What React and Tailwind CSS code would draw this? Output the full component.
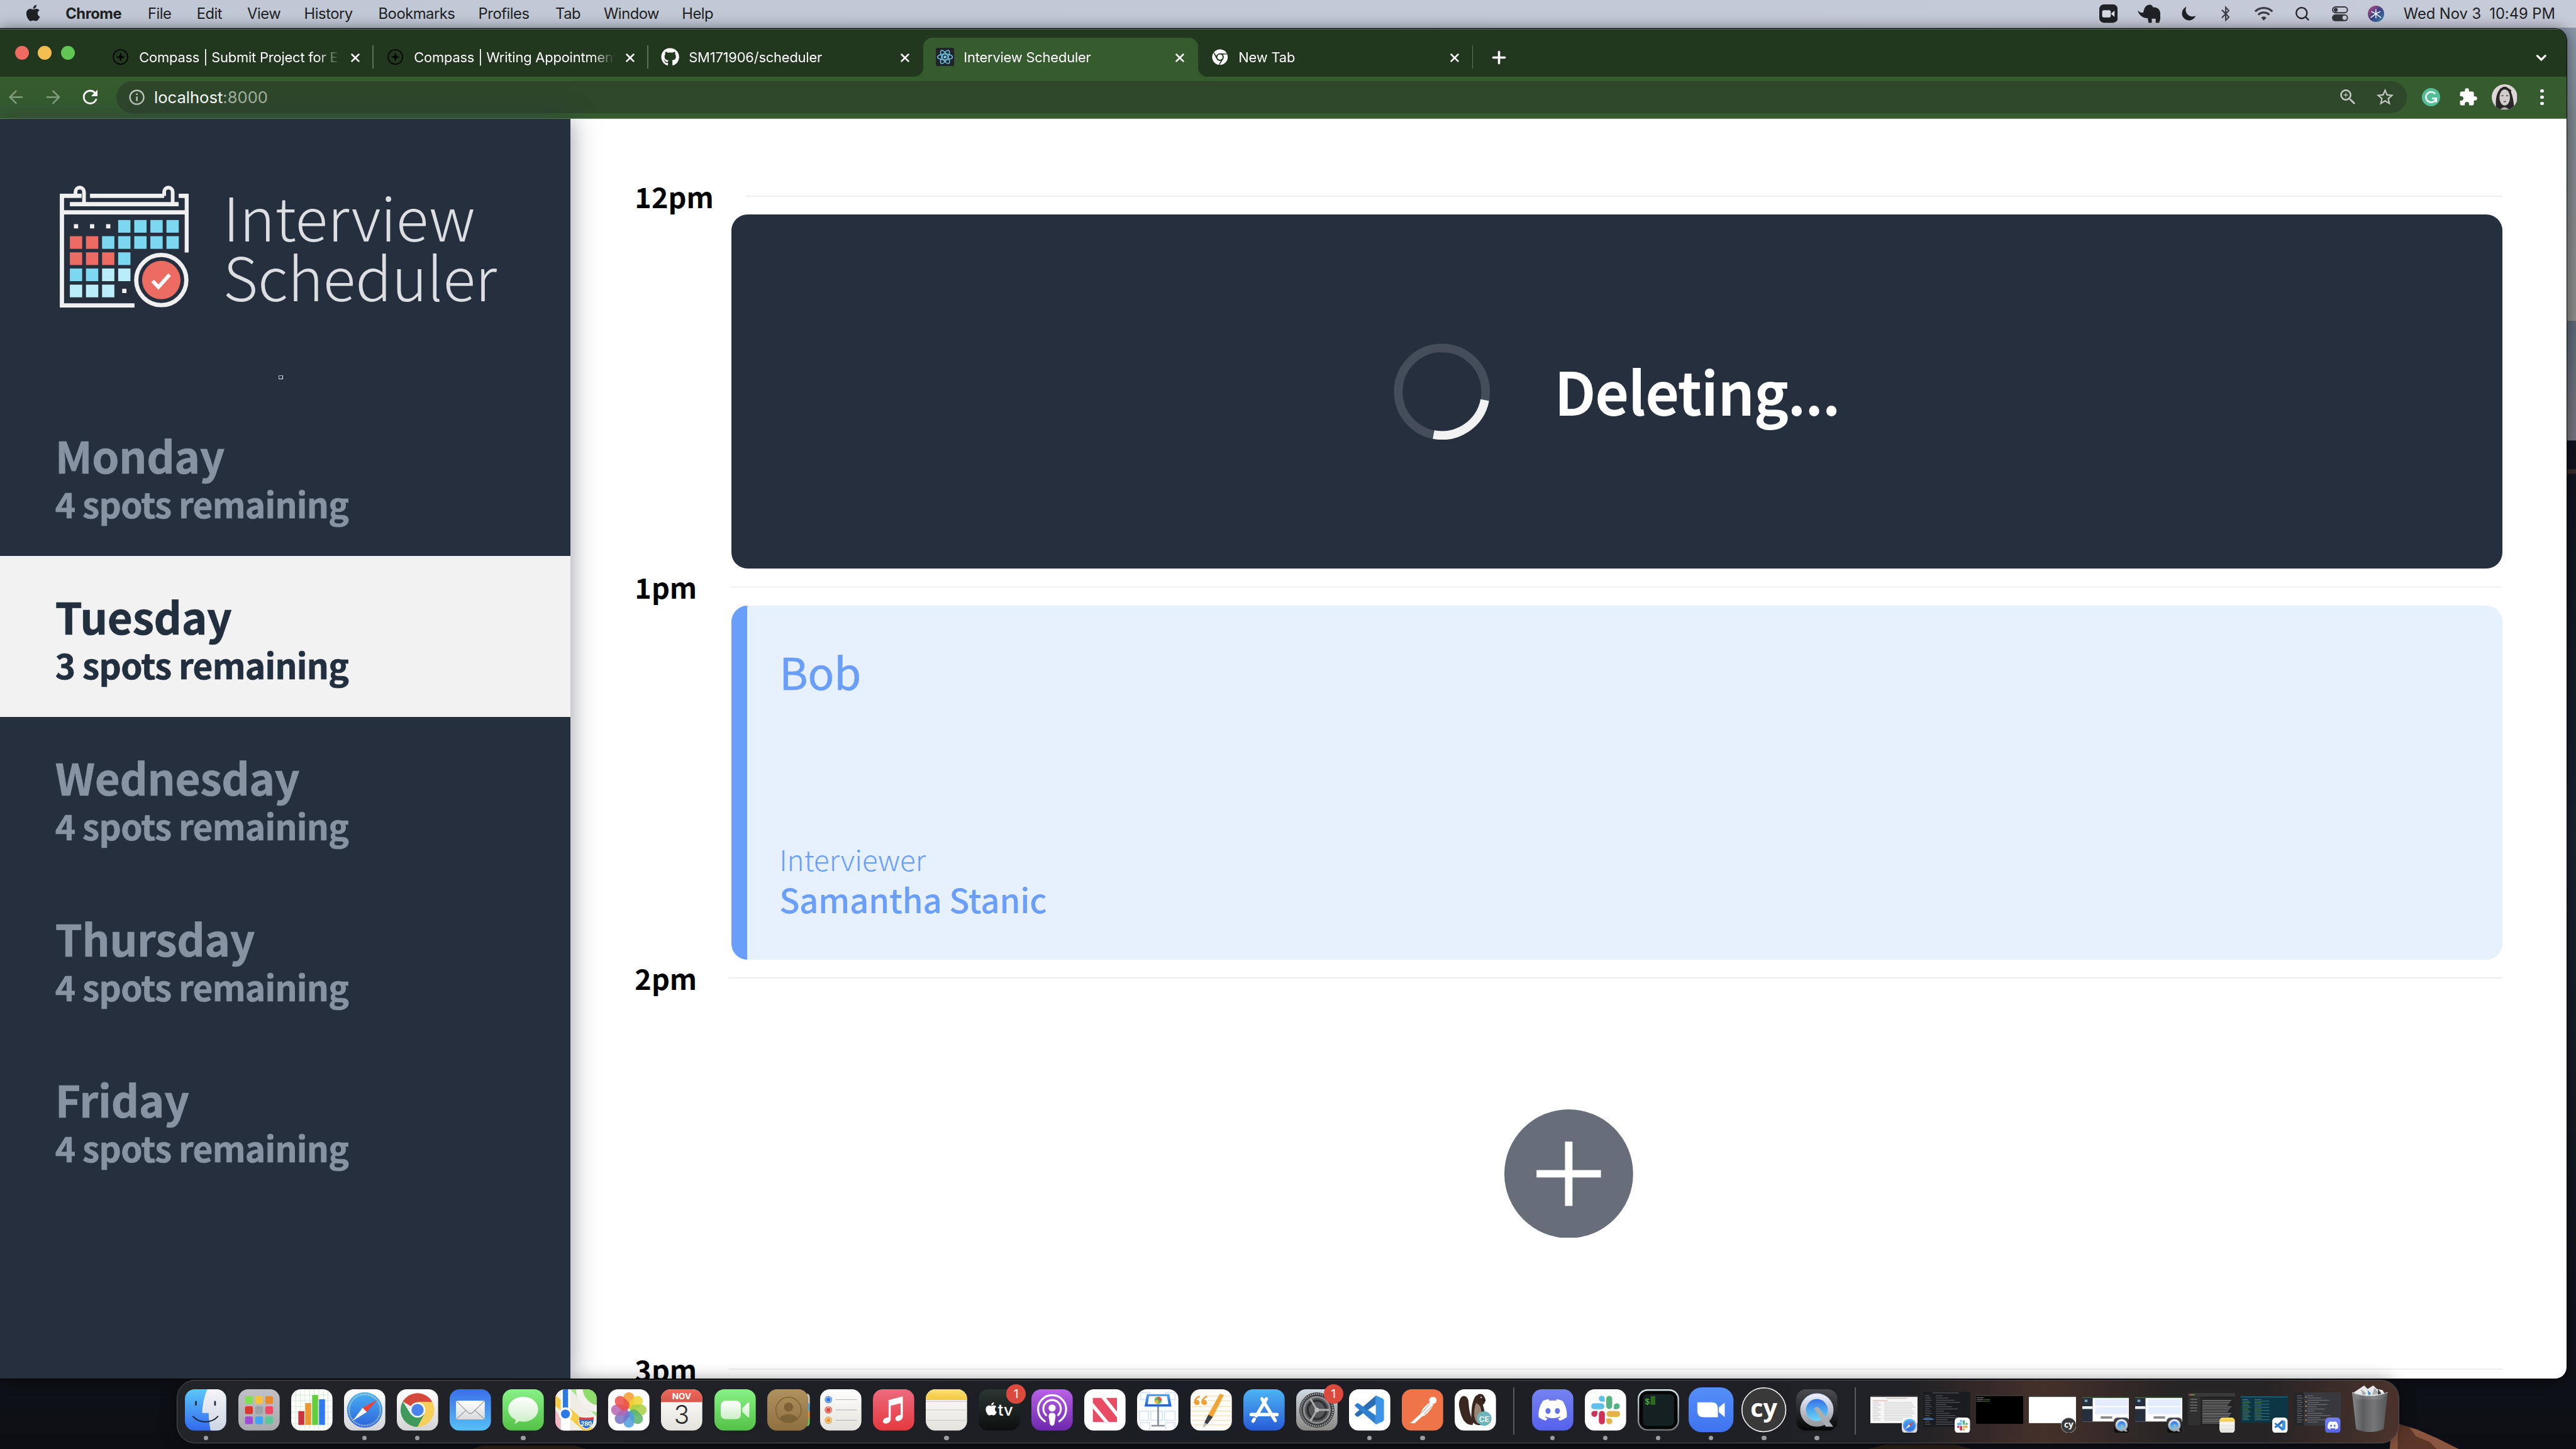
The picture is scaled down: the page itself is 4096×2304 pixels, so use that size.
import React from "react";
import { FaApple, FaBluetoothB, FaGithub, FaDiscord, FaChrome } from "react-icons/fa";
import { MdZoomIn, MdStarBorder, MdExtension, MdInfoOutline, MdRefresh } from "react-icons/md";
import { Search, X, Plus, ChevronDown, ArrowLeft, ArrowRight } from "lucide-react";

/* ---------- shared gradients ---------- */
const gradients = [
  ["gFinder", "#5ac8fa", "#3468ee"],
  ["gFinderR", "#f3f4f7", "#cfd6e2"],
  ["gWhite", "#ffffff", "#d4d4d6"],
  ["gPaper", "#ffffff", "#e4e2dc"],
  ["gSafari", "#48b0f2", "#2c63dc"],
  ["gMail", "#3a6fe8", "#57c0f6"],
  ["gEnvelope", "#ffffff", "#d9dadd"],
  ["gGreen", "#86f285", "#54c147"],
  ["gBubble", "#ffffff", "#cdeec8"],
  ["gGray", "#bfc1c4", "#a9aaad"],
  ["gRedTop", "#ef6a5d", "#d8564b"],
  ["gContacts", "#b0905c", "#8f7040"],
  ["gMusic", "#ec6a7c", "#e5383f"],
  ["gNotes", "#fbe07a", "#f5c73c"],
  ["gTv", "#2b3532", "#0c100f"],
  ["gPod", "#b861e6", "#6d28ad"],
  ["gStore", "#4db4f3", "#285bd8"],
  ["gGear", "#cfdbe2", "#8a8783"],
  ["gDiscord", "#7583f0", "#5661ec"],
  ["gZoom", "#548ff8", "#3f73f0"],
  ["gTermRim", "#d8eaf2", "#77777a"],
  ["gQt", "#4a4c50", "#050505"],
  ["gQtRing", "#e6ebfb", "#9a9ba0"],
  ["gQtIn", "#2d66e2", "#6fe6fb"],
  ["gKeynote", "#52a6f7", "#1e5fd6"],
];

function Defs() {
  return (
    <svg className="absolute h-0 w-0" aria-hidden="true">
      <defs>
        {gradients.map(([id, a, b]) => (
          <linearGradient key={id} id={id} x1="0" y1="0" x2="0" y2="1">
            <stop offset="0" stopColor={a} />
            <stop offset="1" stopColor={b} />
          </linearGradient>
        ))}
        <linearGradient id="gTrashH" x1="0" y1="0" x2="1" y2="0">
          <stop offset="0" stopColor="#8d9092" />
          <stop offset="0.3" stopColor="#5f6163" />
          <stop offset="0.6" stopColor="#7b7d7f" />
          <stop offset="1" stopColor="#55585a" />
        </linearGradient>
        <clipPath id="tileClip">
          <rect width="36" height="36" rx="8.5" />
        </clipPath>
      </defs>
    </svg>
  );
}

/* ---------- dock icons, 36 x 36 ---------- */
const Tile = ({ fill, children }) => (
  <g clipPath="url(#tileClip)">
    <rect width="36" height="36" fill={fill} />
    {children}
  </g>
);

const Finder = () => (
  <Tile fill="url(#gFinder)">
    <path d="M19.5 0C17 6 15.3 13 15 20.7h5.7c0 5.6.6 10.5 1.7 15.300H36V0z" fill="url(#gFinderR)" />
    <path d="M9.6 10.8v2.800M26.2 10.8v2.800" stroke="#1d2b45" strokeWidth="1.5" strokeLinecap="round" />
    <path d="M7 23.6c5.5 6.3 16.2 6.3 21.700 0" stroke="#17202f" strokeWidth="1" fill="none" strokeLinecap="round" />
  </Tile>
);

const padColors = ["#7ee04e", "#f4c23b", "#e98a2c", "#d9372c", "#9aa0a6", "#ee4a62", "#a24bd8", "#3fa4f5", "#5ac996"];
const Launchpad = () => (
  <Tile fill="url(#gGray)">
    {padColors.map((c, i) => (
      <rect key={c} x={5.8 + (i % 3) * 8.8} y={6 + Math.floor(i / 3) * 8.8} width="6.8" height="6.8" rx="1.6" fill={c} />
    ))}
  </Tile>
);

const Numbers = () => (
  <Tile fill="#fff">
    <path d="M4 0v36M8 0v36M12 0v36M16 0v36M20 0v36M24 0v36M28 0v36M32 0v36M0 5h36M0 10h36M0 15h36M0 20h36M0 25h36M0 30h36" stroke="#c9efc4" strokeWidth=".5" />
    <rect x="6.2" y="19" width="5.2" height="12" fill="#c9343f" />
    <rect x="12.2" y="12" width="5.2" height="19" fill="#ee962f" />
    <rect x="18.2" y="5" width="5.2" height="26" fill="#63cf3c" />
    <rect x="24.2" y="8.7" width="5.2" height="22.3" fill="#2f7bee" />
  </Tile>
);

const Safari = () => (
  <Tile fill="url(#gWhite)">
    <circle cx="18" cy="18" r="15.4" fill="url(#gSafari)" />
    <circle cx="18" cy="18" r="13.6" fill="none" stroke="#e6f2fd" strokeWidth="1.5" strokeDasharray=".5 .92" />
    <path d="M29 9 16.2 16.2l3.6 3.600z" fill="#ee4237" />
    <path d="M7.5 27.5l8.7-11.3 3.6 3.600z" fill="#f5f7fa" />
  </Tile>
);

const Chrome = () => (
  <Tile fill="url(#gWhite)">
    <path d="M18 18 5.2 10.7A14.7 14.7 0 0 1 30.8 11z" fill="#d3493a" />
    <path d="M18 11H30.8A14.7 14.7 0 0 1 18 32.7L24 21.5z" fill="#f6cf5a" />
    <path d="M5.2 10.7A14.7 14.7 0 0 0 18 32.7L24 21.6 12 21.6z" fill="#3f9a5c" />
    <circle cx="18" cy="18" r="6.7" fill="#fff" />
    <circle cx="18" cy="18" r="5.3" fill="#4a83ee" />
  </Tile>
);

const Mail = () => (
  <Tile fill="url(#gMail)">
    <rect x="5.5" y="10" width="25" height="16.3" rx="1" fill="url(#gEnvelope)" />
    <path d="M5.8 26 14.5 18M30.2 26 21.5 18M6 10.5l9.7 9.5q2.3 2.2 4.6 0l9.7-9.5" fill="none" stroke="#8f9297" strokeWidth=".6" />
  </Tile>
);

const Messages = () => (
  <Tile fill="url(#gGreen)">
    <path d="M18 6.5c7.4 0 13 4.8 13 10.8s-5.6 10.9-13 10.9c-1.3 0-2.5-.1-3.6-.4-1.2 1-2.600 1.9-4.2 2.2.9-1 1.3-2.3 1.2-3.600C7.3 24.5 5 21.2 5 17.3c0-6 5.6-10.8 13-10.8z" fill="url(#gBubble)" />
  </Tile>
);

const Maps = () => (
  <Tile fill="#f0ede6">
    <path d="M14 0h22v20z" fill="#8fdc6c" />
    <path d="M13 0h7l16 18v6z" fill="#a5e58a" />
    <path d="M21-3a18 18 0 0 0 19 20" fill="none" stroke="#f3f2ee" strokeWidth="6" />
    <path d="M-2 8 32 38" stroke="#f7cc49" strokeWidth="7" />
    <path d="M0 18v18h5V24z" fill="#f1b9c4" />
    <path d="M8.8 0v36" stroke="#fff" strokeWidth="8" />
    <path d="M8.8 0v18" stroke="#2b79e8" strokeWidth="4.6" />
    <circle cx="8.8" cy="21.5" r="5.8" fill="#fff" />
    <circle cx="8.8" cy="21.5" r="3.9" fill="#2b79e8" />
    <path d="M21 24q6 1.5 12 0c1.5 5 0 8-6 10.5C21 32 19.5 29 21 24z" fill="#2d6fd6" stroke="#fff" strokeWidth=".7" />
    <path d="M20.8 24q6 1.5 12.4 0l.3 2.600H20.5z" fill="#d8433a" />
    <text x="27" y="31.5" textAnchor="middle" fontSize="5" fontWeight="700" fill="#fff" fontFamily="Inter, sans-serif">280</text>
  </Tile>
);

const petals = ["#f29a2e", "#ecd531", "#a6cf43", "#58b36a", "#4d9de0", "#7a71c4", "#b565b0", "#ea4f45"];
const Photos = () => (
  <Tile fill="#fdfdfd">
    {petals.map((c, i) => (
      <rect key={c} x="13.3" y="2.6" width="9.4" height="14.4" rx="4.7" fill={c} fillOpacity=".85" transform={`rotate(${i * 45} 18 18)`} />
    ))}
  </Tile>
);

const Calendar = () => (
  <Tile fill="url(#gPaper)">
    <rect width="36" height="11.2" fill="url(#gRedTop)" />
    <text x="18" y="8.7" textAnchor="middle" fontSize="7.4" fontWeight="700" fill="#fff" fontFamily="Inter, sans-serif">NOV</text>
    <text x="18" y="30.3" textAnchor="middle" fontSize="22" fill="#2b2b2b" fontFamily="Inter, sans-serif" fontWeight="300">3</text>
  </Tile>
);

const FaceTime = () => (
  <Tile fill="url(#gGreen)">
    <rect x="5.5" y="10" width="17.5" height="16" rx="4" fill="url(#gBubble)" />
    <path d="M24.2 16.5 29 11.8q1.3-.8 1.3.6v11.2q0 1.4-1.3.6l-4.8-4.7z" fill="url(#gBubble)" />
  </Tile>
);

const Contacts = () => (
  <g>
    <path d="M30 4h5.5q1.5 1 1.5 4v6h-7z" fill="#c9c9c7" />
    <path d="M30 12h7v7.5h-7z" fill="#4aa9e8" />
    <path d="M30 19h7v6.5h-7z" fill="#f08d2b" />
    <path d="M30 25h7v3q0 3-1.5 4H30z" fill="#62c654" />
    <rect width="35.6" height="36" rx="8.5" fill="url(#gContacts)" />
    <circle cx="18.5" cy="18" r="11" fill="none" stroke="#7d6238" strokeWidth=".8" />
    <circle cx="18.5" cy="15.5" r="4" fill="#7d6238" />
    <path d="M10.7 25.5c2-5 13.6-5 15.6 0-3.5 4.5-12 4.5-15.6 0z" fill="#7d6238" />
  </g>
);

const Reminders = () => (
  <Tile fill="url(#gPaper)">
    {["#2f76ee", "#e6483c", "#f09a37"].map((c, i) => (
      <g key={c}>
        <circle cx="7.2" cy={9 + i * 9} r="2.8" fill="#fff" stroke={c} strokeWidth=".7" />
        <circle cx="7.2" cy={9 + i * 9} r="1.9" fill={c} />
        <path d={`M13.5 ${9 + i * 9}h18.5`} stroke="#b9babd" strokeWidth=".6" />
      </g>
    ))}
  </Tile>
);

const Music = () => (
  <Tile fill="url(#gMusic)">
    <path d="M13.6 9.5 26 6.2v17.3c0 2.2-1.7 3.9-3.9 4.2-1.9.2-2.8-1-2.5-2.5.3-1.7 2-2.4 4.5-2.9V12.2l-8.6 2.2v11.4c0 2.2-1.8 3.7-3.9 4-2 .3-3.1-1-2.8-2.5.3-1.7 2.1-2.4 4.8-2.9z" fill="#fff" />
  </Tile>
);

const Notes = () => (
  <Tile fill="url(#gPaper)">
    <rect width="36" height="9.3" fill="url(#gNotes)" />
    <path d="M0 10.5h36" stroke="#a9a9a7" strokeWidth=".8" strokeDasharray=".6 .6" />
    <path d="M0 18h36M0 27h36" stroke="#cfcecb" strokeWidth=".7" />
  </Tile>
);

const Tv = () => (
  <Tile fill="url(#gTv)">
    <FaApple x="4.5" y="10.5" size="13" color="#fff" />
    <text x="16.8" y="23.2" fontSize="14" fill="#fff" fontFamily="Inter, sans-serif" fontWeight="500">tv</text>
  </Tile>
);

const Podcasts = () => (
  <Tile fill="url(#gPod)">
    <g fill="none" stroke="#fff" strokeWidth="1.7" strokeLinecap="round">
      <path d="M11.7 27.8a12.2 12.2 0 1 1 12.6 0" />
      <path d="M12.8 22.5a7.6 7.6 0 1 1 10.4 0" />
    </g>
    <circle cx="18" cy="16.3" r="3.1" fill="#fff" />
    <path d="M15 23.5q0-3 3-3t3 3L20 30q-.5 1.7-2 1.700T16 30z" fill="#fff" />
  </Tile>
);

const News = () => (
  <Tile fill="#fff">
    <path d="M7.5 7.5h7.3l13.7 17v4h-7.200L7.5 11.8z" fill="#e94b62" />
    <path d="M19 7.5h9.5v12zM7.5 16.5l10 12h-10z" fill="#e94b62" />
  </Tile>
);

const Keynote = () => (
  <Tile fill="#fdfdff">
    <path d="M3 3h8v6H3zM25 3h8v6h-8zM2 19h8v8H2zM12 19h10v8H12zM24 19h9v8h-9zM3 29h8v8H3zM25 29h8v8h-8z" fill="none" stroke="#cfe2f7" strokeWidth=".8" />
    <path d="M17.5 14h1.6v18h-1.6z" fill="#8d959f" />
    <path d="M12.5 31h11.5v1.400H12.5z" fill="#8d959f" />
    <path d="M8.5 4.2h19.5l2 10.800H6.5z" fill="url(#gKeynote)" />
    <path d="M10.5 6h15.5l1.3 7H9.2z" fill="#fff" />
    <circle cx="18.3" cy="9.6" r="3.2" fill="#59b858" />
    <path d="M18.3 9.6V6.4a3.2 3.2 0 0 1 3.2 3.200z" fill="#e9503f" />
    <path d="M18.3 9.6v3.2a3.2 3.2 0 0 1-3.2-3.200z" fill="#f2b53a" />
  </Tile>
);

const Pages = () => (
  <Tile fill="#fdfcf8">
    <path d="M15 6h21M15 10h21M0 15h36M0 19h36M0 23h36M0 27h36M0 31h36" stroke="#f8dfb4" strokeWidth=".7" />
    <path d="M8 6C4.5 7.5 3.5 9.5 3.5 12M14.5 6C11 7.5 10 9.5 10 12" stroke="#ee9f33" strokeWidth="1.4" fill="none" />
    <circle cx="5.6" cy="11.5" r="2.2" fill="#ee9f33" />
    <circle cx="12" cy="11.5" r="2.2" fill="#ee9f33" />
    <path d="m25.5 4 3.500 1-9.500 19-4-2z" fill="#f1a534" />
    <path d="m15.5 22 4 2-4.500 6-3.500 2.700L12.5 28z" fill="#3d3f42" />
    <path d="M10.5 33.5 12 29l2.500 1.200z" fill="#b8bbbf" />
  </Tile>
);

const AppStore = () => (
  <Tile fill="url(#gStore)">
    <path d="M20 8.4 11.3 23.200M16.2 8.400l11.500 18.800M6.8 22h15.500M25.5 22h3.800M9.500 26l-1 1.700" stroke="#fff" strokeWidth="2.9" strokeLinecap="round" />
  </Tile>
);

const spokes = [0, 120, 240];
const Settings = () => (
  <Tile fill="url(#gGear)">
    <circle cx="18" cy="18" r="15.3" fill="#3c3d3f" />
    <circle cx="18" cy="18" r="14" fill="none" stroke="#a6a8aa" strokeWidth="1.4" strokeDasharray=".9 .9" />
    <circle cx="18" cy="18" r="11.3" fill="#55575a" stroke="#8c8e91" strokeWidth="1.6" />
    <circle cx="18" cy="18" r="8" fill="none" stroke="#2e2f31" strokeWidth="2" />
    {spokes.map((a) => (
      <path key={a} d="M18 18h11" stroke="#a9abad" strokeWidth="1.7" transform={`rotate(${a} 18 18)`} />
    ))}
    <circle cx="18" cy="18" r="2" fill="#b9bbbd" />
  </Tile>
);

const VSCode = () => (
  <Tile fill="#fff">
    <path d="M5.3 21.2 23.4 5.500v7.600L8.3 23.700q-.9.5-1.600-.1l-1.400-1.200q-.7-.6 0-1.200z" fill="#2a6db5" />
    <path d="M5.3 14.800 23.4 30.500v-7.600L8.3 12.300q-.9-.5-1.600.1l-1.400 1.200q-.7.6 0 1.200z" fill="#2f7fce" />
    <path d="M23.3 5.300 29.200 8q1.200.6 1.200 2v16q0 1.400-1.200 2l-5.900 2.700z" fill="#3b95e4" />
  </Tile>
);

const Postman = () => (
  <Tile fill="#ef7548">
    <circle cx="27" cy="9.7" r="3.2" fill="#fff" />
    <path d="M24.5 11.5c-4.5 2.500-7 6-8.500 10.500l3 1.500c3.500-2.500 6.500-6 8.500-10z" fill="#fff" />
    <path d="M16 21.5 9 28l-2 1.200 4 .5L19.5 22z" fill="#fff" />
    <path d="m17.5 20.500 6.500-7.500M19 22l7.500-7.500" stroke="#ef7548" strokeWidth=".5" />
  </Tile>
);

const DBeaver = () => (
  <Tile fill="#fff">
    <path d="M4.5 9c2-5 7-3.500 7.500 1.500.5 6 1 12 4.500 18l-1 2.500c-6 .5-9-5-10.500-11-1-4-2-7.500-.5-11z" fill="#3a2722" />
    <path d="M17 8c2-5 8-5 9-1 1.500 2 .5 5.500-1.500 6.500 2 6 3 13-1.500 17.500-6 1-9-3-8.500-9 .2-5 .5-9.500 2.500-14z" fill="#3a2722" />
    <path d="M18.500 12c3 1 4 3 4.500 6 .5 4 0 9-2.500 12-2.500-2-3.500-5-3.500-9 0-3.500.5-6 1.500-9z" fill="#9a8676" />
    <path d="M14 20c-.5-8 1-14 6-15.500" fill="none" stroke="#fff" strokeWidth=".8" />
    <circle cx="23" cy="7" r=".6" fill="#fff" />
    <path d="M24.500 8.500q2 0 2.500 1.500l-2 .5z" fill="#1c1210" />
    <circle cx="25.7" cy="25.5" r="6.3" fill="#6cb5ba" />
    <text x="25.7" y="28.3" textAnchor="middle" fontSize="7.4" fill="#fff" fontFamily="Roboto, sans-serif" fontWeight="500">CE</text>
  </Tile>
);

const Discord = () => (
  <Tile fill="url(#gDiscord)">
    <FaDiscord x="4.6" y="4.6" size="26.8" color="#fff" />
  </Tile>
);

const Slack = () => (
  <Tile fill="#fdfdfd">
    <g fill="#62bfec"><rect x="5.5" y="12.2" width="11.5" height="5.2" rx="2.6" /><path d="M17.3 10.800h-2.400a2.600 2.600 0 1 1 2.400-2.600z" /></g>
    <g fill="#56b283"><rect x="18.6" y="5.7" width="5.2" height="11.5" rx="2.6" /><path d="M25.2 17.300v-2.500a2.600 2.600 0 1 1 2.600 2.500z" /></g>
    <g fill="#e3b34a"><rect x="18.9" y="18.8" width="11.8" height="5.2" rx="2.6" /><path d="M18.7 25.300h2.500a2.600 2.600 0 1 1-2.500 2.600z" /></g>
    <g fill="#cf3058"><rect x="12.2" y="18.8" width="5.2" height="11.7" rx="2.6" /><path d="M10.9 18.800v2.500a2.600 2.600 0 1 1-2.600-2.500z" /></g>
  </Tile>
);

const Terminal = () => (
  <g>
    <rect width="36" height="36" rx="8.5" fill="url(#gTermRim)" />
    <rect x="1.3" y="1.3" width="33.4" height="33.4" rx="7.4" fill="#050606" />
    <rect x="4.5" y="4.3" width="27" height="27.5" rx="3.5" fill="#152023" />
    <text x="6.2" y="13" fontSize="7.4" fill="#5fd64a" fontFamily="Liberation Mono, monospace">$</text>
    <rect x="11.3" y="6" width="4" height="7.5" fill="#2f6a25" />
  </g>
);

const Zoom = () => (
  <g>
    <rect width="36" height="36" rx="10.5" fill="url(#gZoom)" />
    <path d="M7 12h11.500q5 0 5 5v7H12q-5 0-5-5z" fill="#fff" />
    <path d="M24.3 16 29 12.200v11.600L24.3 20z" fill="#fff" />
  </g>
);

const Cypress = () => (
  <g>
    <circle cx="18" cy="18" r="17.6" fill="#393939" stroke="#fff" strokeWidth=".8" />
    <text x="18" y="23.5" textAnchor="middle" fontSize="20" fontWeight="700" fill="#fff" fontFamily="Open Sans, sans-serif">cy</text>
  </g>
);

const QuickTime = () => (
  <Tile fill="url(#gQt)">
    <circle cx="18" cy="18" r="12" fill="url(#gQtIn)" stroke="url(#gQtRing)" strokeWidth="5" />
    <path d="M15.5 17q2.500-3.500 5 0L32.300 32.500h-6.500z" fill="#a9adb4" />
  </Tile>
);

const mainApps = [
  [Finder, true], [Launchpad], [Numbers], [Safari, true], [Chrome, true], [Mail], [Messages, true], [Maps], [Photos],
  [Calendar], [FaceTime], [Contacts], [Reminders], [Music], [Notes, true], [Tv, false, "1"], [Podcasts], [News],
  [Keynote], [Pages], [AppStore], [Settings, false, "1"], [VSCode, true], [Postman, true], [DBeaver],
];
const runningApps = [[Discord, true], [Slack, true], [Terminal, true], [Zoom, true, null, true], [Cypress, true, null, true], [QuickTime, true]];

function DockApp({ icon: Icon, running, badge, large }) {
  return (
    <div className="relative flex h-[53px] w-[46px] shrink-0 flex-col items-center">
      <div className="flex h-[51px] w-[40px] items-center justify-center">
        <svg viewBox="0 0 36 36" className={large ? "size-[39px] shrink-0 overflow-visible" : "size-[36px] shrink-0 overflow-visible"}>
          <Icon />
        </svg>
      </div>
      {running && <div className="-mt-[3px] size-[4px] shrink-0 rounded-full bg-[#9b9da3]" />}
      {badge && (
        <div className="absolute right-0 top-[3px] flex size-[17px] items-center justify-center rounded-full bg-[#dc4a3d] text-[10.5px] leading-none text-white">
          {badge}
        </div>
      )}
    </div>
  );
}

/* ---------- minimised window thumbnails, 41 wide ---------- */
const rows = (n) => Array.from({ length: n }, (_, i) => i);
const SheetThumb = () => (
  <>
    <rect width="41" height="24" fill="#f6f6f6" />
    <rect width="41" height="1.2" fill="#3a3a3c" />
    <path d="M2 4.5h13M14 2.5h18" stroke="#e79a95" strokeWidth=".5" />
    {rows(12).map((i) => <path key={i} d={`M2 ${6 + i * 1.4}h${i % 3 ? 7 : 5}M12 ${6 + i * 1.4}h${24 + (i % 4)}`} stroke="#c9c9c9" strokeWidth=".5" />)}
  </>
);
const SlackThumb = () => (
  <>
    <rect width="41" height="31" fill="#1b1c20" />
    <path d="M8 1h23" stroke="#4a4b50" strokeWidth=".8" />
    <rect y="23" width="9" height="1.4" fill="#2c6bb0" />
    {rows(14).map((i) => <path key={i} d={`M1.5 ${3.5 + i * 1.9}h${4 + (i % 3)}M11 ${3.5 + i * 1.9}h${6 + ((i * 5) % 17)}`} stroke="#67686e" strokeWidth=".5" />)}
  </>
);
const TermThumb = () => (
  <>
    <rect width="41" height="25.5" fill="#000" />
    <rect width="41" height="1" fill="#3a3a3c" />
    <path d="M.5 2.5h6M.5 4h6M.5 5.5h5" stroke="#8b8d88" strokeWidth=".6" />
    <path d="M7 4h5M6 5.5h6" stroke="#5a7c2c" strokeWidth=".6" />
  </>
);
const BlankThumb = () => (
  <>
    <rect width="41" height="24" fill="#fff" />
    <rect width="41" height="1.2" fill="#3a3a3c" />
  </>
);
const SchedulerThumb = () => (
  <>
    <rect width="41" height="21.5" fill="#fdfdfd" />
    <rect width="41" height="1" fill="#2d4a2b" />
    <rect y="1" width="9" height="20.5" fill="#262f3e" />
    <rect y="8.2" width="9" height="2.4" fill="#f2f2f2" />
    <rect x="2" y="2.5" width="2.5" height="2" fill="#7ba7c4" />
    <rect x="11" y="2" width="29" height="6" fill="#e3edfd" />
    <rect x="11" y="9" width="29" height="6" fill="#e3edfd" />
    <rect x="16" y="17" width="10" height="2" fill="#8a8a8a" />
  </>
);
const NotesThumb = () => (
  <>
    <rect width="41" height="28" fill="#242424" />
    <rect width="41" height="3" fill="#3a3a3b" />
    <rect y="3" width="11" height="25" fill="#303031" />
    <circle cx="1.8" cy="1.5" r=".6" fill="#ee6a5f" /><circle cx="3.5" cy="1.5" r=".6" fill="#f5bd4f" /><circle cx="5.2" cy="1.5" r=".6" fill="#61c454" />
    {rows(15).map((i) => <path key={i} d={`M12.5 ${6.5 + i * 1.4}h${25 - (i % 4)}`} stroke="#8c8c8c" strokeWidth=".6" />)}
    {rows(5).map((i) => <path key={i} d={`M2 ${5.5 + i * 2.5}h6`} stroke="#8c8c8c" strokeWidth=".6" />)}
  </>
);
const CodeThumb = () => (
  <>
    <rect width="41" height="23" fill="#0d3644" />
    <rect width="41" height="1.3" fill="#14566a" />
    {rows(14).map((i) => <path key={i} d={`M1.5 ${3 + i * 1.35}h${5 + (i % 3)}M12 ${3 + i * 1.35}h${6 + ((i * 7) % 14)}`} stroke={i % 2 ? "#3f7f86" : "#6c8b45"} strokeWidth=".5" />)}
  </>
);
const DiscordThumb = () => (
  <>
    <rect width="41" height="29" fill="#38393f" />
    <rect width="9" height="29" fill="#25262a" />
    {rows(13).map((i) => <path key={i} d={`M3 ${3 + i * 1.9}h${4 + (i % 2)}M12 ${3 + i * 1.9}h${5 + ((i * 7) % 16)}`} stroke="#7d7e84" strokeWidth=".5" />)}
    {rows(6).map((i) => <circle key={i} cx="10.8" cy={4 + i * 4} r=".6" fill="#d9a35a" />)}
  </>
);

const thumbs = [
  [SheetThumb, 24, Safari], [SlackThumb, 31, Slack], [TermThumb, 25.5, null], [BlankThumb, 24, Cypress],
  [SchedulerThumb, 21.5, QuickTime], [SchedulerThumb, 21.5, QuickTime], [NotesThumb, 28, Notes], [CodeThumb, 23, VSCode], [DiscordThumb, 29, Discord],
];

function DockThumb({ draw: Draw, height, icon: Icon }) {
  return (
    <div className="relative flex h-[50px] w-[46px] shrink-0 items-center justify-center">
      <svg width="41" height={height} viewBox={`0 0 41 ${height}`}><Draw /></svg>
      {Icon && (
        <svg viewBox="0 0 36 36" className="absolute right-[2.5px] top-[32px] size-[13.5px]"><Icon /></svg>
      )}
    </div>
  );
}

const Trash = () => (
  <svg viewBox="0 0 32 41" className="h-[41px] w-[32px]">
    <path d="M2 6 8 2l3-2 3 3 5-3 3 3 5 1 3 5-4 3H5z" fill="#e9e9ea" />
    <path d="m8 3 5 4-3 2zM20 2l4 5-6 1z" fill="#a8abad" />
    <path d="m14 4 3 3-2 2z" fill="#3f8fd8" /><path d="m23 3 3 4-3 1z" fill="#3c3d3f" />
    <path d="M.5 6Q16 12 31.5 6L28 38Q16 43 4 38z" fill="url(#gTrashH)" fillOpacity=".92" />
    <path d="M.5 6Q16 12 31.5 6" fill="none" stroke="#c5c7c9" strokeWidth=".7" />
  </svg>
);

/* ---------- menu bar ---------- */
const menus = [
  ["File", "w-[42.5px]"], ["Edit", "w-[44px]"], ["View", "w-[49.5px]"], ["History", "w-[64.5px]"], ["Bookmarks", "w-[87px]"],
  ["Profiles", "w-[67px]"], ["Tab", "w-[42px]"], ["Window", "w-[68px]"], ["Help", "w-[40px]"],
];

function MenuBar() {
  return (
    <div className="relative flex h-6 shrink-0 items-center bg-gradient-to-r from-[#bfc8d4] to-[#c5cbd7] text-[13px] leading-6 tracking-[-0.02em] text-[#1f2124]">
      <FaApple className="-mt-px ml-[21px] size-[16px]" />
      <span className="ml-[20px] w-[71.5px] font-bold">Chrome</span>
      {menus.map(([label, w]) => (
        <span key={label} className={w}>{label}</span>
      ))}
      <div className="ml-auto flex items-center">
        <div className="flex w-[35px] justify-center">
          <svg viewBox="0 0 16 16" className="size-[16px]"><rect width="16" height="16" rx="4" fill="#1f2124" /><rect x="2.5" y="5" width="7.5" height="6.3" rx="1.5" fill="#d6dbe3" /><path d="m10.6 7.500 2.700-2v5.300l-2.700-2z" fill="#d6dbe3" /></svg>
        </div>
        <div className="flex w-[35px] justify-center">
          <svg viewBox="0 0 20 16" className="h-[16px] w-[20px]"><path d="M0 5c1.500 1.800 3.300 2.500 5 2 .3-3 1.500-5.500 4-6.500C11.500-.3 13 1 13.300 2.500c3.700-.3 6.400 2 6.400 5.500v4.500l-1 3.500h-3v-3.500h-3.400V16H9.500l-.7-4C5 12 1 9.500 0 5z" fill="#1f2124" /></svg>
        </div>
        <div className="flex w-[34px] justify-center">
          <svg viewBox="0 0 14 13" className="h-[13px] w-[13px]"><path d="M5 0a6.600 6.600 0 1 0 8.700 8.300A6.300 6.300 0 0 1 5 0z" fill="#1f2124" /></svg>
        </div>
        <div className="flex w-[31px] justify-center"><FaBluetoothB className="size-[14px] text-[#3d4045]" /></div>
        <div className="flex w-[35px] justify-center">
          <svg viewBox="0 0 17 13" className="h-[13px] w-[17px]" fill="none" stroke="#3a3d41" strokeWidth="1.8"><path d="M1 4.500a10.700 10.700 0 0 1 15 0M3.700 7.400a6.800 6.800 0 0 1 9.600 0" /><path d="m8.500 12.500 2.300-2.600a3.200 3.200 0 0 0-4.600 0z" fill="#3a3d41" stroke="none" /></svg>
        </div>
        <div className="flex w-[32px] justify-center"><Search className="size-[14px]" strokeWidth={2.2} /></div>
        <div className="flex w-[34px] justify-center">
          <svg viewBox="0 0 14 13" className="h-[13px] w-[14px]"><rect x=".6" y=".6" width="12.8" height="5" rx="2.5" fill="none" stroke="#33363b" strokeWidth="1.1" /><circle cx="3.3" cy="3.1" r="1.7" fill="#33363b" /><rect y="7" width="14" height="6" rx="3" fill="#33363b" /><circle cx="11" cy="10" r="1.9" fill="#c5cbd7" /></svg>
        </div>
        <div className="flex w-[28px] justify-center">
          <div className="flex size-[14px] items-center justify-center rounded-full bg-gradient-to-br from-[#c13c78] via-[#3b3f86] to-[#2d8fae]">
            <svg viewBox="0 0 14 14" className="size-[14px]"><path d="M7 3v8M2.500 10.500 7 7l4.500 3.500M3 5l4 2 4-2" stroke="#dff3fb" strokeWidth=".9" fill="none" /></svg>
          </div>
        </div>
        <span className="ml-[10px] mr-[17px] w-[133px] whitespace-pre tracking-[-0.002em]">Wed Nov 3  10:49 PM</span>
      </div>
    </div>
  );
}

/* ---------- browser chrome ---------- */
const CompassIcon = () => (
  <svg viewBox="0 0 16 16" className="size-[16px]"><circle cx="8" cy="8" r="6.3" fill="none" stroke="#050805" strokeWidth="1" /><path d="M8 4 9 7l3 1-3 1-1 3-1-3-3-1 3-1z" fill="#050805" /></svg>
);
const ReactIcon = () => (
  <svg viewBox="0 0 16 16" className="size-[16px]">
    <rect width="16" height="16" rx="1.5" fill="#20232a" />
    <g fill="none" stroke="#6fc9ee" strokeWidth=".8"><ellipse cx="8" cy="8" rx="6.5" ry="2.5" /><ellipse cx="8" cy="8" rx="6.5" ry="2.5" transform="rotate(60 8 8)" /><ellipse cx="8" cy="8" rx="6.5" ry="2.5" transform="rotate(120 8 8)" /></g>
    <circle cx="8" cy="8" r="1.3" fill="#6fc9ee" />
  </svg>
);
const tabs = [
  { title: "Compass | Submit Project for Evaluation", icon: <CompassIcon />, divider: true },
  { title: "Compass | Writing Appointment Tests", icon: <CompassIcon />, divider: true },
  { title: "SM171906/scheduler", icon: <FaGithub className="size-[16px]" /> },
  { title: "Interview Scheduler", icon: <ReactIcon />, active: true },
  { title: "New Tab", icon: <FaChrome className="size-[14px]" />, divider: true },
];

function Tab({ title, icon, active, divider }) {
  return (
    <div className={active ? "relative flex h-[34px] w-[239px] shrink-0 items-center rounded-t-lg bg-[#355b2f] pl-[11px]" : "relative flex h-[34px] w-[239px] shrink-0 items-center pl-[11px]"}>
      {active && (
        <>
          <svg viewBox="0 0 8 8" className="absolute -left-2 bottom-0 size-2"><path d="M8 0v8H0a8 8 0 0 0 8-8z" fill="#355b2f" /></svg>
          <svg viewBox="0 0 8 8" className="absolute -right-2 bottom-0 size-2"><path d="M0 0v8h8a8 8 0 0 1-8-8z" fill="#355b2f" /></svg>
        </>
      )}
      <div className="flex w-[16px] shrink-0 justify-center">{icon}</div>
      <div className="ml-2 mt-px w-[176px] shrink-0 overflow-hidden whitespace-nowrap [mask-image:linear-gradient(to_right,black_155px,transparent_175px)]">{title}</div>
      <X className="ml-[6px] mt-px size-[12px] shrink-0" strokeWidth={2.8} />
      {divider && <div className="absolute right-0 top-[7px] h-5 w-px bg-[#5d7059]" />}
    </div>
  );
}

function BrowserChrome() {
  return (
    <div className="flex shrink-0 flex-col border-t border-[#5d775a] text-white">
      <div className="flex h-[41px] items-center bg-[#21371e]">
        <div className="flex w-[86px] gap-2 pl-[13px]">
          <div className="size-3 rounded-full bg-[#ed6b60]" />
          <div className="size-3 rounded-full bg-[#f5be50]" />
          <div className="size-3 rounded-full bg-[#62c655]" />
        </div>
        <div className="flex items-end self-end text-[12px] leading-4 tracking-[-0.01em]">
          {tabs.map((t) => <Tab key={t.title} {...t} />)}
        </div>
        <Plus className="ml-[14px] mt-[8px] size-[17px]" strokeWidth={2.8} />
        <ChevronDown className="ml-auto mr-[15px] mt-[8px] size-[14px]" strokeWidth={3} />
      </div>
      <div className="flex h-9 items-center bg-[#355b2f]">
        <ArrowLeft className="ml-[5px] size-[18px] text-[#86a081]" strokeWidth={1.9} />
        <ArrowRight className="ml-[14px] size-[18px] text-[#86a081]" strokeWidth={1.9} />
        <MdRefresh className="ml-[14px] size-[19px]" />
        <div className="ml-[13px] flex h-7 w-[1992px] items-center rounded-full bg-[#2e472b]">
          <MdInfoOutline className="ml-[10px] size-[16px] text-[#c0c6c0]" />
          <span className="ml-[7px] mt-px text-[14px] leading-5">localhost<span className="text-[#a4b3a1]">:8000</span></span>
          <MdZoomIn className="ml-auto size-[18px] text-[#c0c8be]" />
          <MdStarBorder className="ml-[14px] mr-[10px] size-[18px] text-[#c0c8be]" />
        </div>
        <div className="ml-[13px] flex size-[16px] items-center justify-center rounded-full bg-[#55bd98]">
          <svg viewBox="0 0 16 16" className="size-4" fill="none" stroke="#fff" strokeWidth="1.4"><path d="M11.5 5A4.500 4.500 0 1 0 12.500 8.700M8.800 9h3.700v3.300" /></svg>
        </div>
        <MdExtension className="ml-[16px] size-[17px]" />
        <svg viewBox="0 0 22 22" className="ml-[12px] size-[22px] rounded-full">
          <rect width="22" height="22" fill="#ddd5d6" />
          <path d="M4 22C3 15 3.500 4 11 2c7.500 1 7.500 12 9 20z" fill="#2a2728" />
          <ellipse cx="11.3" cy="11.5" rx="4.6" ry="7" fill="#d3cccc" />
          <path d="M6.700 9Q8 4 12 4q3.500 1 4 6l1-5-5-3-5 2z" fill="#2a2728" />
          <path d="M8.500 10h1.700M12.500 10h1.700M10.300 15h2.200" stroke="#4a4345" strokeWidth=".8" />
          <path d="M7.500 22q3.500-4 7.500 0z" fill="#b4abab" />
        </svg>
        <div className="ml-[20px] flex flex-col gap-[2.5px]">
          <div className="size-[3px] rounded-full bg-white" />
          <div className="size-[3px] rounded-full bg-white" />
          <div className="size-[3px] rounded-full bg-white" />
        </div>
      </div>
      <div className="h-px bg-[#668561]" />
    </div>
  );
}

/* ---------- scheduler page ---------- */
const B = "#7cd8f0", L = "#b9eef9", R = "#ec6b62";
const cells = [
  [null, null, null, B, B, B, B],
  [R, R, B, B, B, B, B],
  [R, R, R, B],
  [B, B, L, L],
  [L, L, L, null],
];

const LogoCalendar = () => (
  <svg viewBox="0 0 112 107" className="h-[107px] w-[112px] shrink-0">
    <g fill="none" stroke="#f0f0f0" strokeWidth="3.7">
      <path d="M19 9H1.900v95.200H65M26.300 9H90.800M103.400 9h7.100v49.300M8.800 16.200h94.600M1.900 23.300h108.600" />
      <path strokeWidth="3.2" d="M13.7 9V5.500a3.700 3.700 0 0 1 7.400 0v10M90.800 9V5.500a3.700 3.700 0 0 1 7.400 0v10" />
    </g>
    {cells.map((row, y) =>
      row.map((c, x) =>
        c ? (
          <rect key={`${x}-${y}`} x={8.8 + 14 * x} y={30 + 14.05 * y} width="10.7" height="11" fill={c} />
        ) : (
          <rect key={`${x}-${y}`} x={12.3 + 14 * x} y={33.6 + 14.05 * y} width="3.7" height="3.7" fill="#f0f0f0" />
        ),
      ),
    )}
    <circle cx="88.3" cy="82.2" r="21.8" fill="none" stroke="#f0f0f0" strokeWidth="3.7" />
    <circle cx="88.3" cy="82.2" r="16.7" fill={R} />
    <path d="m80.8 83 5 5.300 9.700-10.800" fill="none" stroke="#fff" strokeWidth="3.2" />
  </svg>
);

const days = [
  ["Monday", 4], ["Tuesday", 3], ["Wednesday", 4], ["Thursday", 4], ["Friday", 4],
];

function Sidebar() {
  return (
    <aside className="relative z-10 flex w-[496px] shrink-0 flex-col bg-[#262f3e] shadow-[0_0_20px_rgba(38,47,62,0.5)]">
      <div className="mt-[58px] flex h-[107px] gap-[30px] pl-[52px]">
        <LogoCalendar />
        <div className="flex flex-col text-[52.2px] font-light leading-[51.5px] text-[#dcdee1]">
          <span>Interview</span>
          <span>Scheduler</span>
        </div>
      </div>
      <div className="ml-[242px] mt-[58px] h-[3px] w-[4px] border border-[#b9bcc2] border-r-white border-b-white" />
      <nav className="mt-[14px] flex flex-col">
        {days.map(([day, spots]) => (
          <div
            key={day}
            className={
              day === "Tuesday"
                ? "flex h-[140px] flex-col justify-center bg-[#f2f2f2] pl-12 pt-[6px] font-bold text-[#222f3e] [-webkit-text-stroke:0.4px]"
                : "flex h-[140px] flex-col justify-center pl-12 pt-[6px] font-bold text-[#8792a2] [-webkit-text-stroke:0.4px]"
            }
          >
            <span className="text-[37.8px] leading-[42px] tracking-[-0.2px]">{day}</span>
            <span className="text-[30px] leading-[42px] tracking-[-0.4px]">{spots} spots remaining</span>
          </div>
        ))}
      </nav>
    </aside>
  );
}

const Hour = ({ children }) => (
  <div className="flex h-8 shrink-0 items-center gap-7">
    <span className="text-[24.6px] font-bold leading-8 text-black">{children}</span>
    <div className="h-px flex-1 bg-[#eeeeee]" />
  </div>
);

function Schedule() {
  return (
    <main className="flex flex-1 flex-col overflow-hidden bg-white px-14 pt-[51px]">
      <Hour>12pm</Hour>
      <article className="ml-[84px] flex h-[308px] shrink-0 items-center justify-center gap-[56px] rounded-[14px] bg-[#262f3e]">
        <svg viewBox="0 0 84 84" className="size-[84px]" fill="none" strokeWidth="7.5">
          <circle cx="42" cy="42" r="38" stroke="#454c5a" />
          <path d="M79.3 49.300A38 38 0 0 1 34.700 79.300" stroke="#f2f2f2" />
        </svg>
        <span className="-mt-[3px] text-[50.7px] font-medium leading-[72px] text-white [-webkit-text-stroke:1px]">Deleting...</span>
      </article>
      <Hour>1pm</Hour>
      <article className="ml-[84px] flex h-[308px] shrink-0 flex-col rounded-[14px] border-l-[14px] border-[#699efa] bg-[#e7f0fd] pb-[35px] pl-7 pt-[29px] text-[#699efa]">
        <h2 className="text-[37.8px] leading-[56px] [-webkit-text-stroke:0.4px]">Bob</h2>
        <h4 className="mt-auto text-[25px] font-light leading-[34px]">Interviewer</h4>
        <h3 className="text-[29px] font-medium leading-[36px] tracking-[-0.15px]">Samantha Stanic</h3>
      </article>
      <Hour>2pm</Hour>
      <article className="flex h-[308px] shrink-0 items-center justify-center">
        <svg viewBox="0 0 112 112" className="size-[112px]">
          <circle cx="56" cy="56" r="56" fill="#676e79" />
          <path d="M56 28v56M28 56h56" stroke="#fff" strokeWidth="6.5" />
        </svg>
      </article>
      <Hour>3pm</Hour>
    </main>
  );
}

/* ---------- desktop ---------- */
const Wallpaper = () => (
  <svg viewBox="0 0 2240 1260" className="absolute inset-0 h-[1260px] w-[2240px]">
    <defs>
      <linearGradient id="sky" x1="0" y1="0" x2="0" y2="1"><stop offset="0" stopColor="#8a9bb0" /><stop offset=".4" stopColor="#7f868e" /><stop offset="1" stopColor="#8c8c8a" /></linearGradient>
      <linearGradient id="hill" x1="0" y1="0" x2="0" y2="1"><stop offset="0" stopColor="#5b6677" /><stop offset="1" stopColor="#77757e" /></linearGradient>
      <linearGradient id="ground" x1="0" y1="0" x2="0" y2="1"><stop offset="0" stopColor="#10121f" /><stop offset=".4" stopColor="#1a2130" /><stop offset="1" stopColor="#0c0e14" /></linearGradient>
    </defs>
    <rect width="2240" height="280" fill="url(#sky)" />
    <rect y="279" width="2240" height="105" fill="url(#hill)" />
    <rect y="383" width="2240" height="877" fill="url(#ground)" />
    <path d="M2225 408h15v4h-15z" fill="#3b2a2c" />
    <path d="M2080 1236l8 3 14 4 18 8 18 9h-60z" fill="#8a5640" />
    <path d="M2085 1238l10 3 6 8 12 5 6 6h-34z" fill="#5c3728" />
    <path d="M1640 1256h60l14 4h-90zM420 1257h80l10 3h-100z" fill="#2a2019" />
  </svg>
);

export default function App() {
  return (
    <div className="relative flex h-[1260px] w-[2240px] flex-col overflow-hidden bg-[#0c0e14] font-['Inter',sans-serif] [zoom:1.828572]">
      <Defs />
      <Wallpaper />
      <MenuBar />
      <div className="relative mt-px flex h-[1174px] w-[2232px] shrink-0 flex-col overflow-hidden rounded-r-[10px] shadow-[0_0_0_0.5px_#000,0_0_12px_rgba(0,0,0,0.5)]">
        <BrowserChrome />
        <div className="flex min-h-0 flex-1 font-['Noto_Sans_CJK_JP',sans-serif]">
          <Sidebar />
          <Schedule />
        </div>
      </div>
      <div className="relative ml-[153.5px] mt-px flex h-[55px] w-[1933px] shrink-0 rounded-[16px] border border-[#505156] bg-[linear-gradient(to_right,#232428,#1c1e25_45%,#202125_78%,#45302a_84%,#262425_90%,#272425_94%,#4b332b)] pl-[2px] shadow-[0_0_14px_rgba(0,0,0,0.4)]">
        {mainApps.map(([icon, running, badge], i) => (
          <DockApp key={i} icon={icon} running={running} badge={badge} />
        ))}
        <div className="flex w-[21px] shrink-0 justify-center pt-[6px]"><div className="h-[41px] w-px bg-[#5a5b60]" /></div>
        {runningApps.map(([icon, running, badge, large], i) => (
          <DockApp key={i} icon={icon} running={running} badge={badge} large={large} />
        ))}
        <div className="flex w-[21px] shrink-0 justify-center pt-[6px]"><div className="h-[41px] w-px bg-[#5a5b60]" /></div>
        {thumbs.map(([draw, height, icon], i) => (
          <DockThumb key={i} draw={draw} height={height} icon={icon} />
        ))}
        <div className="flex w-[46px] shrink-0 justify-center pt-[4px]"><Trash /></div>
      </div>
    </div>
  );
}
